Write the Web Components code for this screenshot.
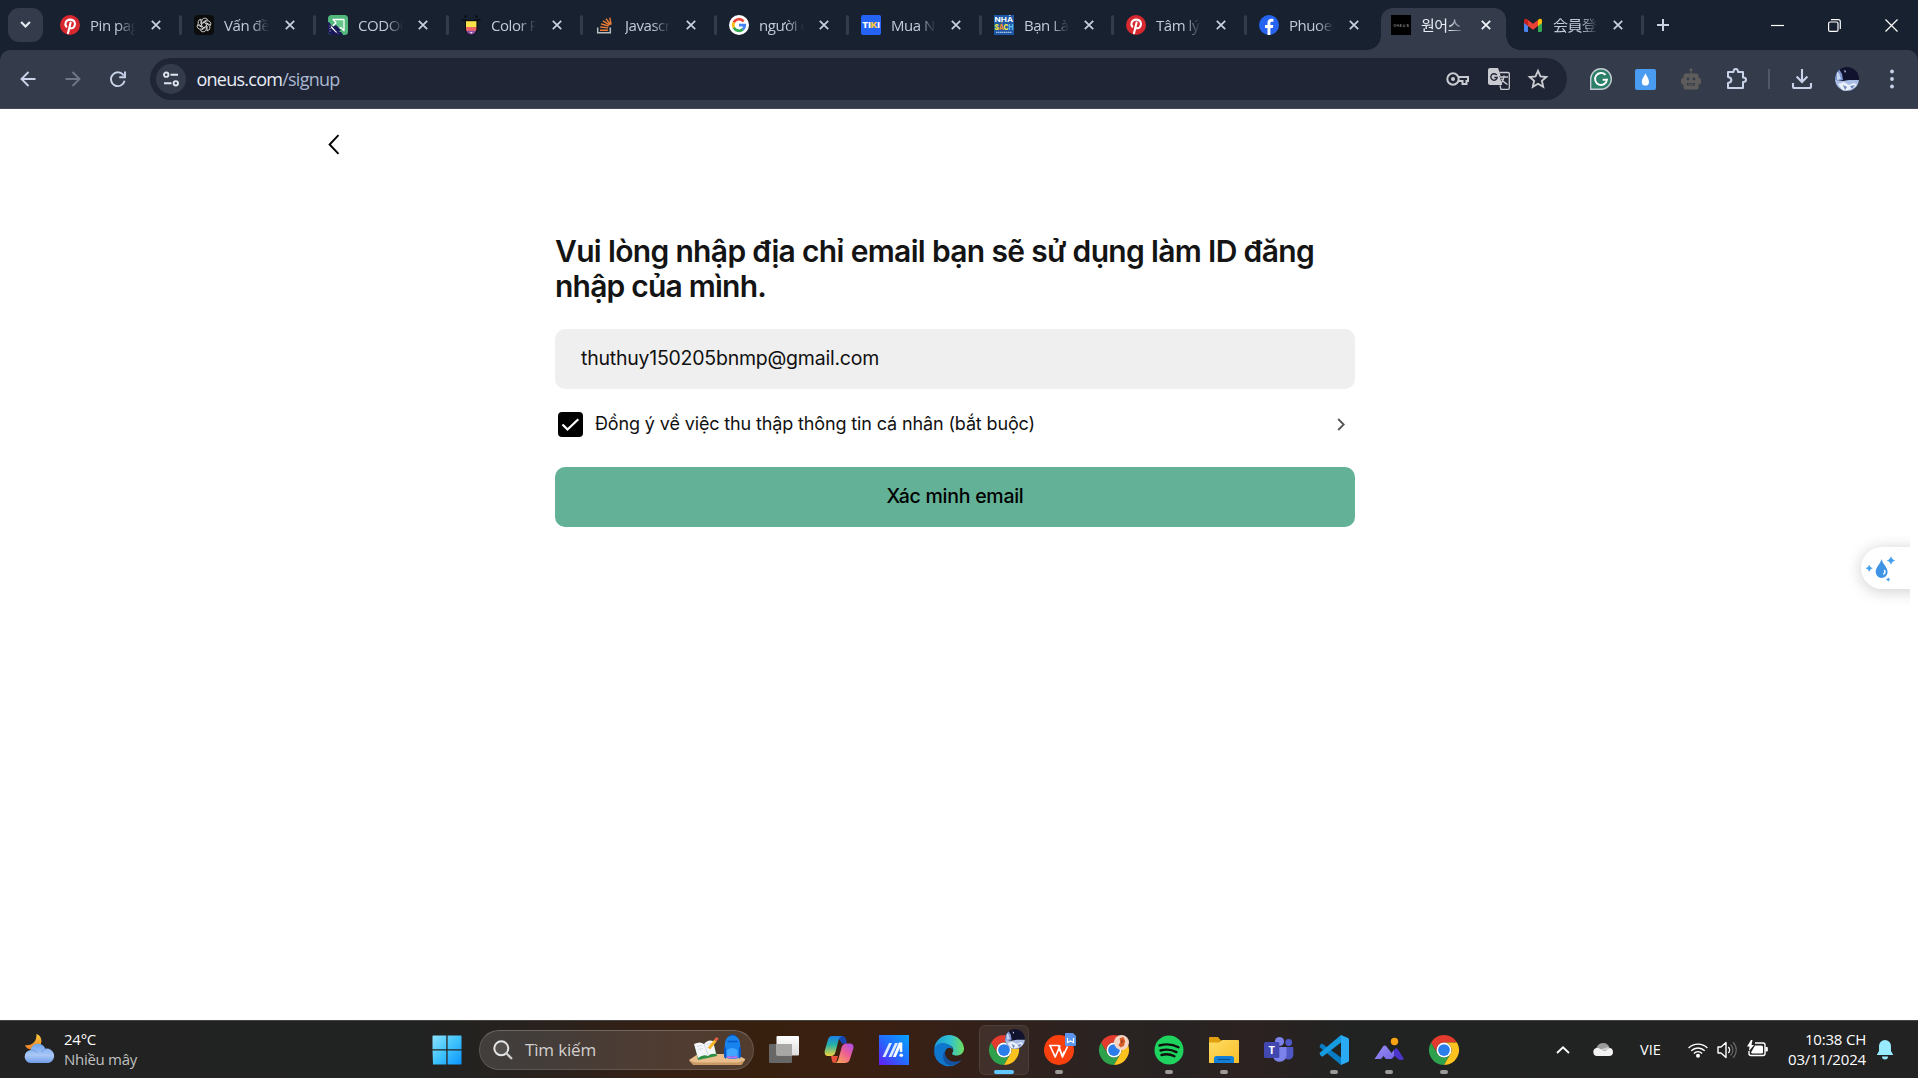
<!DOCTYPE html>
<html lang="vi">
<head>
<meta charset="utf-8">
<title>oneus.com/signup</title>
<style>
html,body{margin:0;height:100%;background:#fff;overflow:hidden}
body{font-family:"Open Sans","Noto Sans","Noto Sans CJK KR",sans-serif}
</style>
</head>
<body>
<desktop-screen></desktop-screen>
<script>
const chrome = `<path fill="#e33b2e" d="M24 12h20.8A24 24 0 0 0 3.2 12L13.6 30A12 12 0 0 1 24 12z"/><path fill="#2da14c" d="M34.4 30L24 48A24 24 0 0 1 3.2 12L13.6 30a12 12 0 0 0 20.8 0z"/><path fill="#fcc31e" d="M34.4 30L24 48A24 24 0 0 0 44.8 12H24a12 12 0 0 1 10.4 18z"/><circle cx="24" cy="24" r="12" fill="#fff"/><circle cx="24" cy="24" r="9.4" fill="#2b7de9"/>`;
const pinterest = `<circle cx="10" cy="10" r="10" fill="#d7282f"/><path d="M8 18.2l2.6-10.6M6.3 11.6C4.4 9 5.6 4.8 10 4.6c4.600-.2 5.800 3.700 4.400 6.600-1.200 2.500-4 2.700-4.900 1" fill="none" stroke="#fff" stroke-width="2.1" stroke-linecap="round"/>`;
const avatar = `<clipPath id="av"><circle cx="12" cy="12" r="12"/></clipPath><g clip-path="url(#av)"><path fill="#11132e" d="M0 0h24v24H0z"/><path fill="#7e95cf" d="M0 3l4-1 3 5 1 6-8 1z"/><path fill="#c6d6f2" d="M2 5l2 1 2 6-4 1zM9 3l2 1-1 2z"/><path fill="#a9bce3" d="M0 13l8 1 6-1h10v11H0z"/><path fill="#e8f0fb" d="M3 17l6-2 5 3 5-2 3 2-5 4-9 2z"/><path fill="#6f86be" d="M8 18l4 2-2 3zM15 19l5-1-3 4z"/></g>`;
const spark = (x,y,r)=>`<path fill="#45a0ee" d="M${x} ${y-r}q${r*.2} ${r*.8} ${r} ${r}q${-r*.8} ${r*.2} ${-r} ${r}q${-r*.2} ${-r*.8} ${-r} ${-r}q${r*.8} ${-r*.2} ${r} ${-r}z"/>`;
// name: [viewBox width, viewBox height, markup]
const ICONS = {
 chevdown:[10,7,`<path d="M1 1l4 4 4-4" fill="none" stroke="#e6eaf2" stroke-width="2"/>`],
 close:[10,10,`<path d="M.8.8l8.400 8.400M9.200.8L.8 9.200" stroke="#c9d2e3" stroke-width="1.700"/>`],
 closeon:[10,10,`<path d="M.8.8l8.400 8.400M9.200.8L.8 9.200" stroke="#f0f3fa" stroke-width="1.800"/>`],
 plus:[12,12,`<path d="M6 0v12M0 6h12" stroke="#c9d2e3" stroke-width="2"/>`],
 min:[13,13,`<path d="M0 6.500h13" stroke="#fff" stroke-width="1.200"/>`],
 max:[13,13,`<rect x=".6" y="3" width="9.400" height="9.400" rx="1.500" fill="none" stroke="#fff" stroke-width="1.200"/><path d="M3 .7h7.300a2 2 0 0 1 2 2V10" fill="none" stroke="#fff" stroke-width="1.200"/>`],
 wclose:[13,13,`<path d="M.5.5l12 12M12.500.5l-12 12" stroke="#fff" stroke-width="1.200"/>`],
 back:[16,16,`<path d="M15.500 8H1.500M8.500 1L1.500 8l7 7" fill="none" stroke="#c8d3ea" stroke-width="1.900"/>`],
 fwd:[16,16,`<path d="M.5 8h14M7.500 1l7 7-7 7" fill="none" stroke="#6f7786" stroke-width="1.900"/>`],
 reload:[16,16,`<path d="M13.700 4.500A6.900 6.900 0 1 0 14.600 9.800" fill="none" stroke="#c8d3ea" stroke-width="1.900"/><path d="M15 .5v5.800H9.200" fill="none" stroke="#c8d3ea" stroke-width="1.900"/>`],
 tune:[16,16,`<g fill="none" stroke="#dfe4ee" stroke-width="1.900"><circle cx="3.200" cy="3.700" r="2.200"/><path d="M7.500 3.700H15M1 12.300h7.500"/><circle cx="12.800" cy="12.300" r="2.200"/></g>`],
 key:[23,14,`<circle cx="7" cy="7" r="5.700" fill="none" stroke="#c9cbd0" stroke-width="2"/><circle cx="7" cy="7" r="2" fill="#c9cbd0"/><path d="M12.500 5H22v4h-1.500v3h-4V9h-4" fill="none" stroke="#c9cbd0" stroke-width="2"/>`],
 translate:[22,22,`<path fill="#c9cbd0" d="M2 0h8l1.500 4L15 17H2a2 2 0 0 1-2-2V2a2 2 0 0 1 2-2z"/><path d="M11.500 4.500H20a1.300 1.300 0 0 1 1.300 1.300V20a1.300 1.300 0 0 1-1.300 1.300h-7L12 17.500" fill="none" stroke="#c9cbd0" stroke-width="1.300"/><path d="M8.700 7.200A3.200 3.200 0 1 0 9.200 9.500H6.300" fill="none" stroke="#1f2535" stroke-width="1.400"/><path fill="#1f2535" d="M11.500 8H20v9h-5.700z"/><path d="M12 9h8M16 7.500V9c-.5 3-2 5-3 6.500M13.500 10.500c1 2.500 3 4.500 6 6" fill="none" stroke="#c9cbd0" stroke-width="1.300"/>`],
 star:[20,20,`<path d="M10 1.900l2.450 5.500 5.900.55-4.450 3.950 1.300 5.900L10 14.750 4.800 17.800l1.300-5.900L1.650 7.950l5.900-.55z" fill="none" stroke="#c9cbd0" stroke-width="1.900"/>`],
 grammarly:[22,22,`<path d="M11 .7A10.300 10.300 0 1 1 11 21.300H.7V11A10.300 10.300 0 0 1 11 .7z" fill="#2b7f69" stroke="#c5cbd2" stroke-width="1.400"/><path d="M15.500 6.900a6 6 0 1 0 1.500 4.800h-4.300" fill="none" stroke="#fff" stroke-width="1.900"/>`],
 drop:[21,21,`<rect width="21" height="21" rx="2" fill="#4a9cf0"/><path fill="#fff" d="M10.500 4.200c.8 2.600 3.500 5.200 3.500 8.700a3.600 3.600 0 0 1-7.200 0c0-3.500 2.900-6.100 3.700-8.700z"/>`],
 robot:[20,22,`<g fill="#5f5d5b"><circle cx="10" cy="1.800" r="1.500"/><path d="M9.400 2h1.200v4H9.400z"/><rect x="2.500" y="5.500" width="15" height="16" rx="2.500"/><rect x="0" y="10" width="20" height="6.500" rx="2"/></g><g fill="#343c4b"><circle cx="7" cy="11" r="1.400"/><circle cx="13" cy="11" r="1.400"/><path d="M6 15h8v2.500H6z"/></g><path d="M7.500 16.200h5" stroke="#5f5d5b"/>`],
 puzzle:[22,22,`<path d="M2 4h5.500c0-4 4.500-4 4.500 0H17v5.500c4 0 4 4.500 0 4.500v6H2v-5c4.500-.6 4.500-5.500 0-6z" fill="none" stroke="#c8d3ea" stroke-width="2" stroke-linejoin="round"/>`],
 download:[20,20,`<path d="M10 0v12.500M4.600 7.500L10 12.900l5.400-5.400M1 14v3.500A1.500 1.500 0 0 0 2.500 19h15a1.500 1.500 0 0 0 1.500-1.500V14" fill="none" stroke="#c8d3ea" stroke-width="2.100"/>`],
 avatar:[24,24,avatar],
 dots:[4,20,`<g fill="#c8d3ea"><circle cx="2" cy="2.500" r="1.900"/><circle cx="2" cy="10" r="1.900"/><circle cx="2" cy="17.500" r="1.900"/></g>`],
 pinterest:[20,20,pinterest],
 gpt:[20,20,`<rect width="20" height="20" rx="4" fill="#0c0c0c"/><g fill="none" stroke="#dedede" stroke-width=".85">${[0,60,120,180,240,300].map(a=>`<path transform="rotate(${a} 10 10)" d="M7.700 11.300V6a3.200 3.200 0 0 1 5.800-1.500M9.300 8.200V6.900l4.300-2.500"/>`).join('')}</g>`],
 codo:[20,20,`<rect width="20" height="20" rx="3.500" fill="#52b77b"/><path d="M0 7c3 0 3 6 7 8s7 1 8 5H3.500A3.500 3.500 0 0 1 0 16.500z" fill="#1a1757"/><path d="M5 4.500h11v11.200l-3.200-3.200-4.500 4.500-4.800-4.800L8 7.700z" fill="#66c58b" stroke="#fff" stroke-width="1.300" stroke-linejoin="round"/><path d="M2.500 9.500l6.500 8L13 15l-5-5-2.500 1.500z" fill="#1a1757"/><path d="M2 10.500v6M6 14.500l4 4" stroke="#f4f4ff" stroke-width=".8" stroke-dasharray="1 1.500"/>`],
 color:[20,20,`<circle cx="4.500" cy="1.500" r="1.300" fill="#0b0d12"/><circle cx="15.500" cy="1.500" r="1.300" fill="#0b0d12"/><path d="M.5 4.500Q10 7 19.500 4.500" stroke="#0b0d12" stroke-width="1.300" fill="none"/><path d="M4 5.500h12.500V14a6.200 6.200 0 0 1-12.500 0z" fill="#0b0d12"/><path d="M5 6.200h10.400v6H5z" fill="#fbe34a"/><path d="M5 12h10.400v2.500L15 16H5.400L5 14.500z" fill="#ee6666"/><path d="M5.400 15.800h9.600a5 5 0 0 1-9.600 0z" fill="#8b4fa6"/><path d="M9 17.500q1.300-1.200 2.600 0l-1.300 1z" fill="#fff"/>`],
 stack:[20,20,`<path d="M2.700 12.500v5.300h12.600v-5.300" fill="none" stroke="#b9bcc0" stroke-width="1.500"/><path d="M5 15.200h8M5.200 12l7.900.9M6 8.800l7.600 2.200M7.900 5.800l6.600 4M11 3.700l4.600 6M14.800 2.600l1.300 7" stroke="#ee7d33" stroke-width="1.400"/>`],
 google:[20,20,`<circle cx="10" cy="10" r="10" fill="#fff"/><g fill="none" stroke-width="2.700"><path d="M14.600 6.400A5.900 5.900 0 0 0 4.800 7.400" stroke="#ea4335"/><path d="M4.800 7.300a6 6 0 0 0 0 5.400" stroke="#fbbc05"/><path d="M4.800 12.600a5.900 5.900 0 0 0 9 1.800" stroke="#34a853"/><path d="M13.800 14.500a6 6 0 0 0 2-4.400H10" stroke="#4285f4"/></g>`],
 tiki:[20,20,`<rect width="20" height="20" rx="2" fill="#2563f5"/><text x="1.300" y="13" font-family="Inter" font-weight="900" font-size="8" fill="#fff" textLength="17.500" lengthAdjust="spacingAndGlyphs">TI<tspan fill="#f9c73e">K</tspan>I</text>`],
 sach:[20,20,`<rect width="20" height="20" fill="#1d57a5"/><text x=".6" y="7" font-family="Inter" font-weight="700" font-size="6" fill="#fff" textLength="18.500" lengthAdjust="spacingAndGlyphs">NHÀ</text><text x=".6" y="15" font-family="Inter" font-weight="800" font-size="8" textLength="18.800" lengthAdjust="spacingAndGlyphs"><tspan fill="#f5ea3c">S</tspan><tspan fill="#f08a2c">Á</tspan><tspan fill="#f5ea3c">C</tspan><tspan fill="#5bc5f2">H</tspan></text><path d="M2 17.300h16" stroke="#cfdff2" stroke-width="1" stroke-dasharray="1.500 .5"/>`],
 facebook:[20,20,`<circle cx="10" cy="10" r="10" fill="#2563f0"/><path d="M8.500 20v-7H6v-3h2.500V7.800c0-2.800 1.600-4 4-4 .8 0 1.500.1 1.900.2v2.700h-1.500c-1.100 0-1.500.6-1.500 1.500V10h2.900l-.5 3h-2.400v7z" fill="#fff"/>`],
 oneus:[20,20,`<rect width="20" height="20" fill="#000"/><g stroke="#777" stroke-width=".7" fill="none"><circle cx="3.800" cy="10.500" r="1"/><path d="M6 11.500v-2l1.500 2v-2M10.500 9.500H9v2h1.500M9 10.500h1.500M12.300 9.500v2h1.500v-2M17.500 9.500H16v1h1.500v1H16"/></g>`],
 gmail:[20,20,`<path fill="#4a86ee" d="M1 5.500L5 8.500V17H2.500A1.500 1.500 0 0 1 1 15.500z"/><path fill="#34a853" d="M19 5.500l-4 3V17h2.500a1.500 1.500 0 0 0 1.500-1.500z"/><path fill="#fbbc04" d="M15 5l1.200-.9C17.500 3.200 19 4 19 5.500V8l-4 3z"/><path fill="#c5221f" d="M5 5L3.800 4.100C2.500 3.200 1 4 1 5.500V8l4 3z"/><path fill="#e94235" d="M5 5l5 3.800L15 5v6l-5 3.700L5 11z"/>`],
 backchev:[12,21,`<path d="M10.500 1.200L1.600 10.500l8.900 9.300" fill="none" stroke="#000" stroke-width="1.900"/>`],
 check:[25,25,`<rect width="25" height="25" rx="4" fill="#000"/><path d="M4.500 12.500l5 5L20.300 7.300" fill="none" stroke="#fff" stroke-width="2.200"/>`],
 chevright:[8,13,`<path d="M1.200 1l5.500 5.500-5.500 5.500" fill="none" stroke="#555" stroke-width="1.800"/>`],
 sparkdrop:[32,28,`<path fill="#3f94e6" d="M16.500 4C17.500 9 22.600 12 22.600 17a5.900 5.900 0 0 1-11.900 0c0-5 4.800-8 5.800-13z"/><path d="M19.500 15.500a2.300 2.300 0 0 1-.8 3.400" stroke="#fff" stroke-width="1.500" stroke-linecap="round" fill="none"/>${spark(26,5.500,4.500)}${spark(4.200,13.300,3.500)}${spark(23.200,24.600,2.300)}`],
 weather:[30,30,`<defs><linearGradient id="m" x2="0" y2="1"><stop stop-color="#f8cf3c"/><stop offset="1" stop-color="#ef7d24"/></linearGradient><linearGradient id="cl" x2="0" y2="1"><stop stop-color="#6fa3ec"/><stop offset=".6" stop-color="#a9c8f7"/><stop offset="1" stop-color="#6f9ce8"/></linearGradient></defs><path d="M11.500 0c6.500 2 7 12-1 15C6 16.500 1 15 0 11c6 1.500 12-3 11.500-11z" fill="url(#m)"/><path d="M6.500 29a6.500 6.500 0 0 1-.8-13c1-8 12.500-8 14.500-1.300A7.300 7.300 0 0 1 23.500 29z" fill="url(#cl)"/><path d="M6 16c3-.5 5 1 6 2.500M20.200 14.700c-2 .6-3 2-3.300 3.500" stroke="#5f8fe0" stroke-width=".7" fill="none"/>`],
 start:[30,30,`<defs><linearGradient id="w" gradientUnits="userSpaceOnUse" x1="0" y1="0" x2="30" y2="30"><stop stop-color="#8fe3ff"/><stop offset=".5" stop-color="#3fc3fb"/><stop offset="1" stop-color="#0a93ff"/></linearGradient></defs><path fill="url(#w)" d="M1 .5h13.300v13.800H.5V1zM15.600.5h13.300l.6.5v13.300H15.600zM.5 15.600h13.800v13.800H1zM15.600 15.600h13.900v13.300l-.5.5H15.600z"/>`],
 search:[20,20,`<circle cx="8.300" cy="8.300" r="7" fill="#ffffff18" stroke="#e6e6e6" stroke-width="2"/><path d="M13.300 13.300l5 5" stroke="#d0d0d0" stroke-width="2.300" stroke-linecap="round"/>`],
 school:[58,32,`<path fill="#e9bd8c" d="M1 26l9-6h38l9 5v1l-3 4H5z"/><path fill="#c99a63" d="M1 26.500l6 2h43l6-2-2.500 4.500H5z"/><path fill="#2f8f46" d="M7 13l19-2 3 11-19 4z"/><path fill="#f5f6fa" d="M6 10q6-3 10 0 4-5 9-3l3 13q-5-1-8 2-5-2-10 2z"/><path d="M16 10l4 11M9 12.500l5-1M10 15.500l5-1M18 11l5-2M19 14l5-2" stroke="#c4cad6" stroke-width=".7"/><path d="M21 14.500l6.500-8" stroke="#f5b526" stroke-width="2.800"/><path d="M27.300 6.500l2.200-2.600" stroke="#e9604a" stroke-width="3"/><path d="M41 3q3.500-3.500 7 0" stroke="#0b4fa8" stroke-width="2" fill="none"/><path fill="#1683ee" d="M37 9a7.500 7.500 0 0 1 15 0l1 14q-8 4-17 0z"/><path fill="#0a57c4" d="M36 14l2-1v12l-2-2zM51 13l2 1v9l-2 2z"/><path fill="#41a6ff" d="M39 16q5-4 10.500 0v6H39z"/><path d="M39 22.500q5 2 10.500 0" stroke="#b473ec" stroke-width="2" fill="none"/><path d="M39.500 7.500h10" stroke="#0a57c4" stroke-width="1.500"/>`],
 taskview:[30,30,`<defs><linearGradient id="tv" x2="0" y2="1"><stop stop-color="#fff"/><stop offset="1" stop-color="#dcdcdc"/></linearGradient></defs><rect x="0" y="9" width="23" height="19" rx="1" fill="#676767"/><rect x="7.500" y="1" width="22.500" height="19.500" rx="1" fill="url(#tv)"/><path fill="#a9a7a6" d="M7.500 9H23v11.500H7.500z"/>`],
 copilot:[30,30,`<defs><linearGradient id="c1" x2="0" y2="1"><stop stop-color="#1b7fe6"/><stop offset=".45" stop-color="#26b3a6"/><stop offset="1" stop-color="#f3d33c"/></linearGradient><linearGradient id="c2" x1="1" y1="0" x2=".2" y2="1"><stop stop-color="#a64df0"/><stop offset=".5" stop-color="#ee5e94"/><stop offset="1" stop-color="#f7a255"/></linearGradient></defs><path fill="#1746b5" d="M13 1h5.500q2.500 0 3.300 3l1.200 4.500H18z"/><path fill="#e7503b" d="M7 21h7l-1.500 5q-.8 2-2.500 2-1.500 0-2-2z"/><path fill="url(#c1)" d="M8 1h10q-2.500.5-3.300 3.500L11.500 17Q10.500 21 7 21H4q-4 0-3.300-5L4 4.500Q5 1 8 1z"/><path fill="url(#c2)" d="M22.500 8.500H26q4 0 3.500 4.500L26 24q-1 4-5 4h-10q2.500-.5 3.300-3.500l3.200-11.500q1-4.500 5-4.500z"/>`],
 ma:[30,30,`<defs><linearGradient id="ma" x1="0" y1="1" x2="1" y2="0"><stop stop-color="#651cf5"/><stop offset=".5" stop-color="#226cff"/><stop offset="1" stop-color="#08a4ff"/></linearGradient></defs><path fill="url(#ma)" d="M0 0h30v30H0z"/><path fill="#dce9ff" d="M3.500 22L10 8h3L6.500 22zM9.500 22L16 8h3l-6.500 14z"/><path fill="#fff" d="M13.800 22L20 7.500h3.300V17h-2.500v-4L16.800 22z"/><circle cx="22.300" cy="20.300" r="1.800" fill="#fff"/>`],
 edge:[30,30,`<defs><linearGradient id="e1" x2="1"><stop stop-color="#169bd9"/><stop offset=".55" stop-color="#33c1cf"/><stop offset="1" stop-color="#6ee05a"/></linearGradient></defs><path fill="url(#e1)" d="M.3 13A15 15 0 0 1 30 13c.3 5-3.500 7.500-7.500 7.500-3.500 0-5-1.300-4-2.800 2.500-4-1-8-5.500-8-5 0-10 1.500-12.700 3.300z"/><path fill="#0f76ce" d="M.1 15C1 9.500 7 7 12 8.500c4 1 6.500 4 7 6.500-2-3-6-3-7.500.5-2 5 1.500 10 7 11.500 4 1 7-.5 9-2.300A15 15 0 0 1 .1 15z"/><path fill="#15539f" d="M11.500 15.500c-2 5 1.500 10 7 11 4 .7 7-.5 9-1.800-2.500 4-8 6-12.500 5.300C9 28.500 7 20 11.500 15.500z"/>`],
 chrome:[48,48,chrome],
 chrome2:[48,48,chrome+`<circle cx="36" cy="12" r="12" fill="#f4d6c7"/><path fill="#d65d28" d="M33 5l6-2 3 6-2 8-5 3-4-4 3-4z"/><path fill="#9d3c20" d="M36 8l3 1-2 4-2-1z"/>`],
 wps:[30,30,`<circle cx="15" cy="15" r="15" fill="#f8400f"/><path d="M5 10.500h9.500l3.800 10.500 2-4.500M6 10.500l5.200 11.500 5-11.500M15 12.500l3.500 9.500 5-10.500" stroke="#fff" stroke-width="1.700" fill="none" stroke-linejoin="round"/>`],
 wbadge:[11,13,`<path fill="#5b95f0" d="M1 0h7l3 3v9a1 1 0 0 1-1 1H1a1 1 0 0 1-1-1V1a1 1 0 0 1 1-1z"/><path d="M2.500 5v4.500l3-1.500 3 1.500V5" fill="none" stroke="#fff" stroke-width="1.200"/>`],
 spotify:[30,30,`<circle cx="15" cy="15" r="14.500" fill="#1ed35e"/><path d="M5.500 10.500c6.500-1.800 13.500-1.200 19 1.700M6.500 15.500c5.500-1.500 11-1 16 1.600M7.500 20c4.500-1.200 9-.8 13 1.300" stroke="#101010" stroke-width="2.400" fill="none" stroke-linecap="round"/>`],
 folder:[30,30,`<defs><linearGradient id="f" x2="1" y2="1"><stop stop-color="#ffdc63"/><stop offset="1" stop-color="#f7be29"/></linearGradient></defs><path fill="#e0a010" d="M0 3q0-1 1-1h8l3 3.500V12H0z"/><path fill="url(#f)" d="M0 7.500h10l3-2.500h16q1 0 1 1v21.500q0 .5-1 .5H1q-1 0-1-.5z"/><path fill="#1380d8" d="M5 28v-4.500Q5 21 7.500 21h15q2.500 0 2.500 2.500V28z"/><path d="M9 24.500h12" stroke="#0a4f93" stroke-width="1.200"/>`],
 teams:[30,30,`<circle cx="24.700" cy="7.500" r="3.400" fill="#5059c9"/><path fill="#4f57c4" d="M20 12h9.300v8a5 5 0 0 1-9.300 2z"/><circle cx="15.500" cy="6.500" r="4.600" fill="#7b83eb"/><path fill="#7b83eb" d="M9 12h13.500v9a7 7 0 0 1-13.500 1z"/><rect y="7" width="15.300" height="16" rx="1.500" fill="#4248b0"/><text x="7.600" y="19" text-anchor="middle" font-family="Open Sans" font-weight="700" font-size="11" fill="#fff">T</text>`],
 vscode:[30,30,`<path fill="#087cc4" d="M1.500 9.500L3 8.500l19 14V30L.5 12z"/><path fill="#149be0" d="M1.500 20.500l2 1.200L22 7.500V0L.5 18z"/><path fill="#2aaaf2" d="M22 0l7 3q1 .5 1 1.500v21q0 1-1 1.500l-7 3z"/>`],
 mountain:[30,30,`<defs><linearGradient id="mt" x2="1" y2="1"><stop stop-color="#9a8df2"/><stop offset="1" stop-color="#7568e6"/></linearGradient></defs><path fill="#4c35c8" d="M14 24l6-9q2-3 4-.5L30 24q-3 2-6 0l-3-3-3 3z"/><path fill="url(#mt)" d="M.5 24L9 11.500q1.500-2 3.500 0l5 6.500 2.500-3v6l-3 3h-5l-2.500-3L7 24z"/><circle cx="20.500" cy="6.500" r="3.700" fill="#f9a313"/>`],
 caret:[14,8,`<path d="M1 7l6-5.700L13 7" fill="none" stroke="#fff" stroke-width="1.800"/>`],
 cloud:[20,13,`<path fill="#9b9b9b" d="M3 7C3.500 3 6 0 10 0c3.500 0 5.500 1.800 6.500 4.500L10 7z"/><path fill="#f3f3f3" d="M4 13a4 4 0 0 1-.5-7.900c2-.3 3 .4 4.500 1.200l4 1.700 3-2.500c3-1.500 5 .8 5 3.500a4 4 0 0 1-4 4z"/><path fill="#cfcfcf" d="M8 6.300l6-2c1.500 0 2.300.3 3 1L11.800 8z"/>`],
 wifi:[20,16,`<g fill="none" stroke="#fff" stroke-width="1.400"><path d="M.6 6a13.300 13.300 0 0 1 18.800 0M3.300 8.800a9.500 9.500 0 0 1 13.400 0M5.900 11.400a5.700 5.700 0 0 1 8.200 0"/></g><circle cx="10" cy="13.700" r="2" fill="#fff"/>`],
 volume:[20,18,`<path d="M1 6h3l5-4.500v15L4 12H1z" fill="none" stroke="#fff" stroke-width="1.400" stroke-linejoin="round"/><path d="M11.300 6a4 4 0 0 1 0 6" fill="none" stroke="#fff" stroke-width="1.300"/><path d="M13.500 3.500a7.500 7.500 0 0 1 0 11M16 1.200a11 11 0 0 1 0 15.600" fill="none" stroke="#666" stroke-width="1.200"/>`],
 battery:[21,17,`<path d="M8 3h8a2 2 0 0 1 2 2v8.500a2 2 0 0 1-2 2H4a2 2 0 0 1-2-2V11" fill="none" stroke="#fff" stroke-width="1.400"/><path fill="#fff" d="M8 5.500h6.500q1.500 0 1.500 1.500v5.500q0 1-1.500 1H5L4 12.500zM18.500 7H20q.8 0 .8.800v3q0 .8-.8.800h-1.500zM4 0L0 6.500h2.500L2 11l5-6H4.500L5.500 0z"/>`],
 bell:[16,19,`<path fill="#98ebff" d="M8 0a6 6 0 0 1 6 6v5l2 3.500V15H0v-.5L2 11V6a6 6 0 0 1 6-6zM5 16.500h6a3 3 0 0 1-6 0z"/>`]
};
const def=(name,html,after)=>customElements.define(name,class extends HTMLElement{
  constructor(){super();this.attachShadow({mode:'open'})}
  connectedCallback(){this.shadowRoot.innerHTML=typeof html==='function'?html(this):html;after&&after(this)}
});
def('ui-icon',el=>{
  const [w,h,m]=ICONS[el.getAttribute('name')],s=+(el.getAttribute('size')||w),H=s*h/w;
  return `<style>:host{display:block;flex:none;width:${s}px;height:${H}px}svg{display:block;overflow:visible}</style><svg width="${s}" height="${H}" viewBox="0 0 ${w} ${h}">${m}</svg>`});
/* Single line of text whose tracking is adjusted to a given width */
def('fit-text',`<style>:host{display:block;width:max-content;white-space:nowrap;flex:none}</style><slot></slot>`,el=>{
  const w=+el.getAttribute('w'),n=el.textContent.length;
  const nat=el.getBoundingClientRect().width;
  if(w&&nat)el.style.letterSpacing=((w-nat)/n).toFixed(3)+'px'});
def('browser-tab',el=>{
  const on=el.hasAttribute('active');
  return `<style>
  :host{display:flex;flex:none;width:${el.getAttribute('w')}px;height:50px;align-items:center;position:relative;color:${on?'#e8ecf5':'#c3cbdb'}}
  .sep{width:3px;height:20px;border-radius:2px;background:${el.hasAttribute('sep')?'#343c4b':'transparent'};margin:0 12px 0 -1px}
  .bg{position:absolute;left:4px;right:3px;top:8px;bottom:0;background:#343c4b;border-radius:12px 12px 0 0}
  .bg:before,.bg:after{content:"";position:absolute;bottom:0;width:14px;height:14px}
  .bg:before{left:-14px;background:radial-gradient(circle at 0 0,transparent 13.500px,#343c4b 14px)}
  .bg:after{right:-14px;background:radial-gradient(circle at 100% 0,transparent 13.500px,#343c4b 14px)}
  ui-icon,.t{position:relative}
  .t{width:46px;margin:0 ${el.getAttribute('w')<134?14:15}px 0 10px;overflow:hidden;white-space:nowrap;font-size:15px;letter-spacing:-.45px;line-height:26px;padding-bottom:1px;-webkit-mask:linear-gradient(90deg,#000 60%,transparent 98%)}
  </style>${on?'<div class="bg"></div>':''}<div class="sep"></div><ui-icon name="${el.getAttribute('icon')}"></ui-icon><div class="t"><slot></slot></div><ui-icon name="${on?'closeon':'close'}"></ui-icon>`});
const tabs=[['pinterest','Pin pag',134],['gpt','Vấn đề',134,1],['codo','CODOC',133,1],['color','Color P',134,1],['stack','Javascr',134,1],['google','người d',132,1],['tiki','Mua N',133,1],['sach','Bạn Là',132,1],['pinterest','Tâm lý',133,1],['facebook','Phuoen',132,1],['oneus','원어스',132,2],['gmail','会員登',132]];
def('tab-strip',`<style>
 :host{display:flex;align-items:center;height:50px;background:#18212f}
 .drop{width:35px;height:34px;margin:0 3px 0 8px;border-radius:11px;background:#343c4b;display:grid;place-items:center}
 .end{width:3px;height:20px;border-radius:2px;background:#343c4b;margin:0 13px 0 0}
 .win{margin-left:auto;display:flex;gap:44px;padding-right:20px}
 </style><div class="drop"><ui-icon name="chevdown" size="11"></ui-icon></div>${tabs.map(t=>`<browser-tab icon="${t[0]}" w="${t[2]}" ${t[3]==1?'sep':''} ${t[3]==2?'active':''}>${t[1]}</browser-tab>`).join('')}<div class="end"></div><ui-icon name="plus"></ui-icon>
 <div class="win"><ui-icon name="min"></ui-icon><ui-icon name="max"></ui-icon><ui-icon name="wclose"></ui-icon></div>`);
def('tool-bar',`<style>
 :host{display:block;background:#18212f}
 .bar{height:59px;box-sizing:border-box;border-bottom:1px solid #474a55;background:#343c4b;border-radius:10px 10px 0 0;display:flex;align-items:center}
 .nav{display:flex;gap:29px;padding:0 24px 0 20px}
 .omni{width:1417px;height:42px;border-radius:21px;background:#1f2535;display:flex;align-items:center;box-sizing:border-box;padding:0 19px 0 6px;color:#a9b7d0;font-size:18px}
 .tune{width:30px;height:30px;border-radius:50%;background:#343c4b;display:grid;place-items:center;margin-right:10.500px}
 b{font-weight:400;color:#e8edf7}
 .acts{margin-left:auto;display:flex;align-items:center;gap:18.500px}
 .ext{display:flex;align-items:center;flex:1;padding-left:22.500px}
 </style><div class="bar"><div class="nav"><ui-icon name="back"></ui-icon><ui-icon name="fwd"></ui-icon><ui-icon name="reload"></ui-icon></div>
 <div class="omni"><div class="tune"><ui-icon name="tune"></ui-icon></div><fit-text w="143"><b>oneus.com</b>/signup</fit-text><div class="acts"><ui-icon name="key"></ui-icon><ui-icon name="translate"></ui-icon><ui-icon name="star"></ui-icon></div></div>
 <div class="ext"><ui-icon name="grammarly"></ui-icon><ui-icon name="drop" style="margin-left:23.500px"></ui-icon><ui-icon name="robot" style="margin-left:25px"></ui-icon><ui-icon name="puzzle" style="margin-left:25px"></ui-icon><div style="width:2px;height:20px;background:#515968;margin:0 22px 0 20px"></div><ui-icon name="download"></ui-icon><ui-icon name="avatar" style="margin-left:23px"></ui-icon><ui-icon name="dots" style="margin-left:31px"></ui-icon></div></div>`);
def('sign-up',`<style>
 :host{display:block;height:911px;background:#fff;font-family:Inter,sans-serif;color:#111;position:relative}
 header{height:125px;padding:25px 0 0 328px;box-sizing:border-box}
 main{width:800px;margin-left:555px}
 h1{margin:0;font-size:30px;font-weight:570;line-height:35px;color:#141414}
 .in{margin-top:25px;height:60px;border-radius:10px;background:#efefef;display:flex;align-items:center;box-sizing:border-box;padding:0 0 2px 26px;font-size:19.500px;color:#111}
 .agree{display:flex;align-items:center;height:25px;margin:23px 0 30px 3px;padding-right:10px;font-size:18px}
 .agree fit-text{margin:-2px auto 0 12px;font-weight:370}
 .btn{height:60px;box-sizing:border-box;padding-bottom:2px;border-radius:10px;background:#63b297;display:grid;place-items:center;font-size:19.500px;font-weight:450;color:#000}
 .float{position:absolute;right:8px;top:406px;width:81px;height:98px;overflow:hidden}
 .pill{position:absolute;left:32px;top:32px;width:90px;height:42px;border-radius:21px;background:#fff;box-shadow:0 2px 16px #0003}
 .pill ui-icon{margin:8px 0 0 4px}
 </style><header><ui-icon name="backchev"></ui-icon></header><main><h1><fit-text w="759">Vui lòng nhập địa chỉ email bạn sẽ sử dụng làm ID đăng</fit-text><fit-text w="211">nhập của mình.</fit-text></h1>
 <div class="in"><fit-text w="298">thuthuy150205bnmp@gmail.com</fit-text></div>
 <div class="agree"><ui-icon name="check"></ui-icon><fit-text w="440">Đồng ý về việc thu thập thông tin cá nhân (bắt buộc)</fit-text><ui-icon name="chevright"></ui-icon></div>
 <div class="btn"><fit-text w="137">Xác minh email</fit-text></div></main>
 <div class="float"><div class="pill"><ui-icon name="sparkdrop"></ui-icon></div></div>`);
def('task-app',el=>{const s=el.getAttribute('state'),b=el.getAttribute('badge');return `<style>
 :host{display:grid;place-items:center;flex:none;width:50px;height:50px;box-sizing:border-box;position:relative;border-radius:6px;${s=='on'?'background:#ffffff12;box-shadow:inset 0 0 0 1px #ffffff12;':''}}
 i{position:absolute;bottom:1px;left:50%;transform:translateX(-50%);height:4px;border-radius:2px;width:${s=='on'?20:8}px;background:${s=='on'?'#60c8ff':'#9b9a99'}}
 .b{position:absolute;top:${b=='avatar'?4:8}px;right:${b=='avatar'?4:8}px}
 </style><ui-icon name="${el.getAttribute('icon')}" size="30"></ui-icon>${b?`<ui-icon class="b" name="${b}" size="${b=='avatar'?20:11}"></ui-icon>`:''}${s?'<i></i>':''}`});
def('task-bar',`<style>
 :host{display:flex;align-items:center;height:58px;box-sizing:border-box;border-top:1px solid #454442;color:#fff;font-size:15px;
 background:linear-gradient(90deg,#222222 0,#212322 420px,#2a211c 560px,#352014 650px,#38200f 760px,#3a2012 880px,#342019 970px,#2b2321 1090px,#272322 1180px,#2c2221 1250px,#212322 1350px,#222 100%)}
 .weather{display:flex;align-items:center;gap:9px;width:398px;padding-left:25px;line-height:20px}
 .weather ui-icon{margin-top:-1px}.weather .s{color:#c0c0c0}.weather .x{margin-top:-1px}
 .search{width:275px;height:40px;border-radius:20px;background:#ffffff21;border:1px solid #ffffff22;border-top-color:#ffffff38;box-sizing:border-box;margin:0 5px 0 17px;display:flex;align-items:center;padding:0 7px 0 13px;font-size:17px;color:#d3d0ce}
 .search fit-text{margin:0 auto 0 12px}
 .apps{display:flex;gap:5px;width:705px}
 .tray{display:flex;align-items:center;margin-left:auto;padding-right:25px}
 .clock{display:flex;flex-direction:column;align-items:flex-end;line-height:20px;margin:-1px 11px 0 20px}
 </style><div class="weather"><ui-icon name="weather"></ui-icon><div class="x"><fit-text w="32">24°C</fit-text><fit-text class="s" w="73">Nhiều mây</fit-text></div></div>
 <div style="width:9px"></div><ui-icon name="start"></ui-icon>
 <div class="search"><ui-icon name="search"></ui-icon><fit-text w="71">Tìm kiếm</fit-text><ui-icon name="school"></ui-icon></div>
 <div class="apps"><task-app icon="taskview"></task-app><task-app icon="copilot"></task-app><task-app icon="ma"></task-app><task-app icon="edge"></task-app><task-app icon="chrome" state="on" badge="avatar"></task-app><task-app icon="wps" state="run" badge="wbadge"></task-app><task-app icon="chrome2"></task-app><task-app icon="spotify" state="run"></task-app><task-app icon="folder" state="run"></task-app><task-app icon="teams"></task-app><task-app icon="vscode" state="run"></task-app><task-app icon="mountain" state="run"></task-app><task-app icon="chrome" state="run"></task-app></div>
 <div class="tray"><ui-icon name="caret"></ui-icon><ui-icon name="cloud" style="margin:0 27px 0 23px"></ui-icon><fit-text w="21" style="font-size:14.500px">VIE</fit-text><ui-icon name="wifi" style="margin-left:27px"></ui-icon><ui-icon name="volume" style="margin-left:9px"></ui-icon><ui-icon name="battery" style="margin-left:10px;margin-top:-3px"></ui-icon><div class="clock"><fit-text w="61">10:38 CH</fit-text><fit-text w="78">03/11/2024</fit-text></div><ui-icon name="bell"></ui-icon></div>`);
def('desktop-screen',`<style>:host{display:flex;flex-direction:column;width:1918px;height:1078px;overflow:hidden}</style><tab-strip></tab-strip><tool-bar></tool-bar><sign-up></sign-up><task-bar></task-bar>`);
</script>
</body>
</html>
